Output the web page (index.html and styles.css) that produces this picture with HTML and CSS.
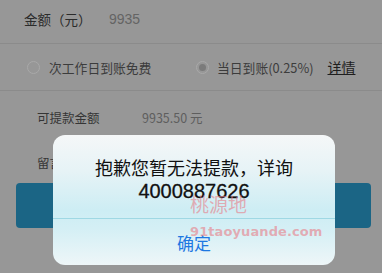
FILE: index.html
```html
<!DOCTYPE html>
<html lang="zh">
<head>
<meta charset="utf-8">
<link rel="stylesheet" href="styles.css">
</head>
<body>
<div class="page">
  <div class="row amount">
    <span class="label">金额（元）</span>
    <span class="value">9935</span>
  </div>
  <div class="row options">
    <div class="opt opt-a">
      <span class="radio"></span>
      <span>次工作日到账免费</span>
    </div>
    <div class="opt opt-b">
      <span class="radio checked"></span>
      <span>当日到账(0.25%)</span>
      <span class="detail">详情</span>
    </div>
  </div>
  <div class="row plain first">
    <span class="plabel">可提款金额</span>
    <span class="pvalue">9935.50 元</span>
  </div>
  <div class="row plain second">
    <span class="plabel">留言</span>
  </div>
  <div class="btn"></div>
</div>

<div class="dialog">
  <div class="msg">
    <div>抱歉您暂无法提款，详询</div>
    <div class="phone">4000887626</div>
  </div>
  <div class="ok">确定</div>
</div>

<div class="wm wm1">桃源地</div>
<div class="wm wm2">91taoyuande.com</div>
</body>
</html>
```

FILE: styles.css
```css
html, body {
  margin: 0;
  padding: 0;
}
body {
  width: 382px;
  height: 273px;
  overflow: hidden;
  background: #979797;
  font-family: "Noto Sans CJK SC", "Liberation Sans", sans-serif;
  position: relative;
}
.page {
  display: flex;
  flex-direction: column;
}
.row {
  display: flex;
  align-items: center;
  box-sizing: border-box;
}
.amount {
  height: 44px;
  padding: 0 0 5px 24px;
  border-bottom: 1px solid #8b8b8b;
  font-size: 13.5px;
}
.amount .label {
  color: #2b2b2b;
  width: 85px;
}
.amount .value {
  color: #646464;
  font-family: "Liberation Sans", sans-serif;
  font-size: 14px;
}
.options {
  height: 47px;
  border-bottom: 1px solid #8b8b8b;
  font-size: 12.8px;
  color: #3c3c3c;
}
.opt {
  display: flex;
  align-items: center;
}
.opt-a {
  margin-left: 27px;
  width: 169px;
}
.radio {
  width: 13px;
  height: 13px;
  border: 1px solid #a9a9a9;
  border-radius: 50%;
  margin-right: 9px;
  box-sizing: border-box;
  display: flex;
  align-items: center;
  justify-content: center;
}
.opt-b .radio {
  margin-right: 8px;
}
.radio.checked::after {
  content: "";
  width: 7px;
  height: 7px;
  border-radius: 50%;
  background: #7b7b7b;
}
.detail {
  margin-left: 14px;
  font-size: 14px;
  color: #1e1e1e;
  text-decoration: underline;
}
.plain {
  align-items: flex-start;
  padding-left: 37px;
  font-size: 12.5px;
  line-height: 18px;
  color: #353535;
}
.plain.first {
  height: 47px;
  padding-top: 18px;
}
.plain.second {
  height: 45px;
  padding-top: 16px;
}
.plabel {
  width: 105px;
}
.pvalue {
  color: #5e5e5e;
}
.btn {
  margin: 0 11px 0 16px;
  height: 45px;
  border-radius: 4px;
  background: #1b6585;
}
.dialog {
  position: absolute;
  left: 53px;
  top: 135px;
  width: 282px;
  height: 130px;
  border-radius: 12px;
  overflow: hidden;
  display: flex;
  flex-direction: column;
  background: linear-gradient(180deg, #f5f7f8 0%, #e6f3f6 28%, #cdedf4 58%, #d4eff5 72%, #eef6f8 100%);
}
.msg {
  height: 84px;
  box-sizing: border-box;
  padding-top: 20px;
  text-align: center;
  font-size: 18px;
  line-height: 24px;
  color: #111;
  border-bottom: 1px solid #9fd8e4;
}
.phone {
  font-family: "Liberation Sans", sans-serif;
  font-size: 20px;
  -webkit-text-stroke: 0.3px #111;
}
.ok {
  flex: 1;
  display: flex;
  align-items: center;
  justify-content: center;
  font-size: 17px;
  color: #1d78e2;
  padding-top: 1px;
}
.wm {
  position: absolute;
  color: rgba(232, 125, 135, 0.6);
}
.wm1 {
  left: 190px;
  top: 190px;
  font-size: 19px;
}
.wm2 {
  left: 190px;
  top: 224px;
  font-family: "DejaVu Sans", sans-serif;
  font-weight: bold;
  font-size: 13px;
  letter-spacing: 0.1px;
}
```
